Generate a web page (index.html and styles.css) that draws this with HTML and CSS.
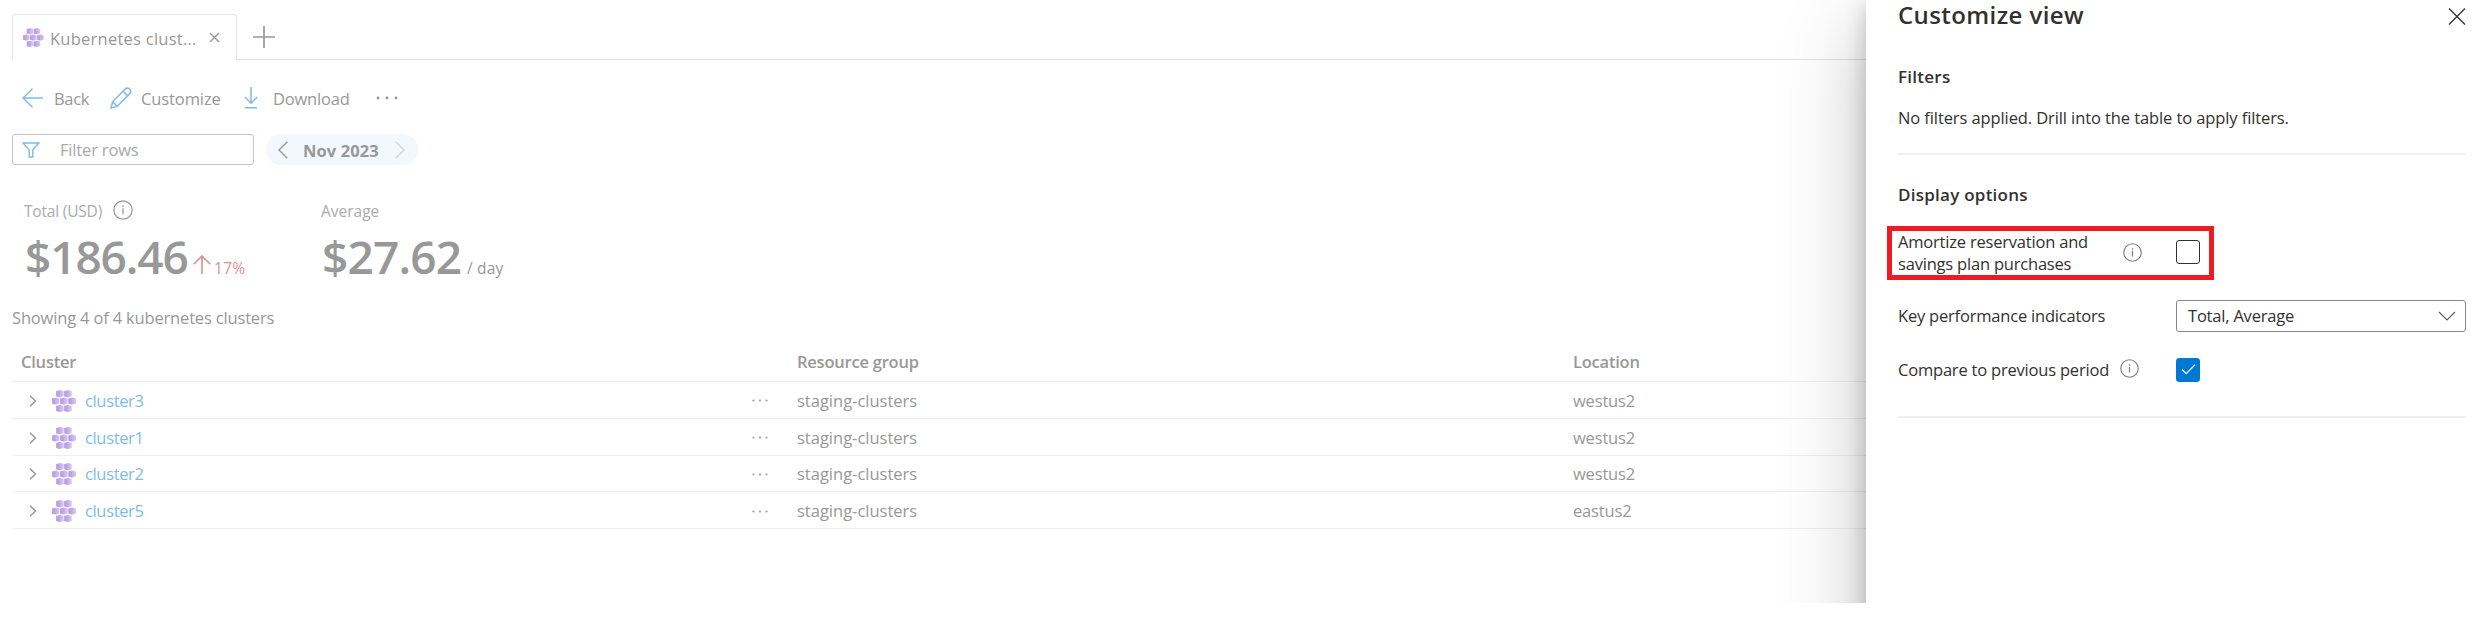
FILE: index.html
```html
<!DOCTYPE html>
<html lang="en">
<head>
<meta charset="utf-8">
<title>Kubernetes clusters</title>
<link rel="stylesheet" href="styles.css">
</head>
<body>
<svg class="defs" aria-hidden="true">
  <defs>
    <linearGradient id="hex" x1="0" x2="1"><stop offset="0" stop-color="#bda3e6"/><stop offset=".5" stop-color="#c8aeee"/><stop offset="1" stop-color="#dac4f8"/></linearGradient>
    <g id="h"><path fill="url(#hex)" d="M-3.7-2.6 0-3.6 3.7-2.6V2.6L0 3.6-3.7 2.6z"/><path fill="#b9a3df" d="M-3.7-2.6-.6-1.9V3.5L-3.7 2.6z"/></g>
    <symbol id="k8s" viewBox="0 0 24 22">
      <use href="#h" x="8" y="3.7"/><use href="#h" x="16" y="3.7"/>
      <use href="#h" x="3.8" y="11"/><use href="#h" x="12" y="11"/><use href="#h" x="20.2" y="11"/>
      <use href="#h" x="8" y="18.3"/><use href="#h" x="16" y="18.3"/>
    </symbol>
    <symbol id="info" viewBox="0 0 20 20"><circle cx="10" cy="10" r="9.2" fill="none" stroke="currentColor" stroke-width="1.2"/><path d="M10 8.3v6M10 5.4v1.6" stroke="currentColor" stroke-width="1.3"/></symbol>
    <symbol id="dots" viewBox="0 0 22 4"><circle cx="2" cy="2" r="1.4"/><circle cx="11" cy="2" r="1.4"/><circle cx="20" cy="2" r="1.4"/></symbol>
  </defs>
</svg>
<div class="app">
  <main class="main">
    <div class="tabs">
      <div class="tab">
        <svg class="tab-icon"><use href="#k8s"/></svg>
        <span class="tab-label">Kubernetes clust...</span>
        <svg class="tab-close" viewBox="0 0 12 12"><path d="M1 1l10 10M11 1L1 11"/></svg>
      </div>
      <div class="tab-new"><svg viewBox="0 0 22 22"><path d="M11 0v22M0 11h22"/></svg></div>
    </div>
    <div class="toolbar">
      <svg class="ic-back" viewBox="0 0 22 20"><path d="M21 10H1M10.500.7L1 10l9.500 9.300"/></svg>
      <span class="t-back">Back</span>
      <svg class="ic-pencil" viewBox="0 0 22 22"><path d="M1 21l1.600-6.200L15 2.300a3.200 3.200 0 0 1 4.600 4.600L7.200 19.400zM2.600 14.800l4.600 4.600M13 4.300l4.600 4.600"/></svg>
      <span class="t-custom">Customize</span>
      <svg class="ic-down" viewBox="0 0 14 22"><path d="M7 0v16M.8 10L7 16.200 13.200 10M1 20.700h12"/></svg>
      <span class="t-down">Download</span>
      <svg class="ic-dots"><use href="#dots"/></svg>
    </div>
    <div class="controls">
      <div class="filter">
        <svg viewBox="0 0 18 16"><path d="M1 1h16l-6.200 6.800v7.200H7.200V7.800z"/></svg>
        <span class="t-filter">Filter rows</span>
      </div>
      <div class="period">
        <svg viewBox="0 0 10 18"><path d="M9.300.8L1 9l8.300 8.200"/></svg>
        <span class="t-period">Nov 2023</span>
        <svg class="next" viewBox="0 0 10 18"><path d="M.7.8L9 9 .7 17.200"/></svg>
      </div>
    </div>
    <div class="kpis">
      <div class="kpi kpi-total">
        <div class="kpi-label"><span class="t-total">Total (USD)</span><svg><use href="#info"/></svg></div>
        <div class="kpi-row"><span class="kpi-value t-v1">$186.46</span><svg class="up" viewBox="0 0 18 19"><path d="M9 19V1M.7 9.300L9 1l8.300 8.300"/></svg><span class="pct">17%</span></div>
      </div>
      <div class="kpi">
        <div class="kpi-label"><span class="t-avg">Average</span></div>
        <div class="kpi-row"><span class="kpi-value t-v2">$27.62</span><span class="unit">/ day</span></div>
      </div>
    </div>
    <div class="summary"><span class="t-sum">Showing 4 of 4 kubernetes clusters</span></div>
    <div class="table">
      <div class="row head"><span class="c1"><span class="t-h">Cluster</span></span><span class="c2"><span class="t-h">Resource group</span></span><span class="c3"><span class="t-h">Location</span></span></div>
      <div class="row"><span class="c1"><svg class="chev" viewBox="0 0 8 12"><path d="M1 .7L6.500 6 1 11.300"/></svg><svg class="k8s"><use href="#k8s"/></svg><a class="t-link">cluster3</a><svg class="more"><use href="#dots"/></svg></span><span class="c2">staging-clusters</span><span class="c3">westus2</span></div>
      <div class="row"><span class="c1"><svg class="chev" viewBox="0 0 8 12"><path d="M1 .7L6.500 6 1 11.300"/></svg><svg class="k8s"><use href="#k8s"/></svg><a class="t-link">cluster1</a><svg class="more"><use href="#dots"/></svg></span><span class="c2">staging-clusters</span><span class="c3">westus2</span></div>
      <div class="row"><span class="c1"><svg class="chev" viewBox="0 0 8 12"><path d="M1 .7L6.500 6 1 11.300"/></svg><svg class="k8s"><use href="#k8s"/></svg><a class="t-link">cluster2</a><svg class="more"><use href="#dots"/></svg></span><span class="c2">staging-clusters</span><span class="c3">westus2</span></div>
      <div class="row"><span class="c1"><svg class="chev" viewBox="0 0 8 12"><path d="M1 .7L6.500 6 1 11.300"/></svg><svg class="k8s"><use href="#k8s"/></svg><a class="t-link">cluster5</a><svg class="more"><use href="#dots"/></svg></span><span class="c2">staging-clusters</span><span class="c3">eastus2</span></div>
    </div>
  </main>
  <aside class="panel">
    <header class="panel-head"><h2 class="t-title">Customize view</h2><svg viewBox="0 0 18 17"><path d="M1 .5l16 16M17 .5l-16 16"/></svg></header>
    <h3 class="h-filters">Filters</h3>
    <p class="nofilters">No filters applied. Drill into the table to apply filters.</p>
    <div class="rule"></div>
    <h3 class="h-display">Display options</h3>
    <div class="amortize">
      <span class="am-label">Amortize reservation and<br>savings plan purchases</span>
      <svg class="info"><use href="#info"/></svg><span class="box"></span>
    </div>
    <div class="option kpi-option"><span class="option-label">Key performance indicators</span>
      <span class="select"><span class="t-sel">Total, Average</span><svg viewBox="0 0 18 10"><path d="M1 1l8 8 8-8"/></svg></span></div>
    <div class="option compare"><span class="option-label">Compare to previous period<svg class="info"><use href="#info"/></svg></span>
      <span class="box checked"><svg viewBox="0 0 16 12"><path d="M1 6l4.500 4.500L15 1"/></svg></span></div>
    <div class="rule last"></div>
  </aside>
</div>
</body>
</html>
```

FILE: styles.css
```css
* { box-sizing: border-box; }
body { margin: 0; background: #fff; font: 16.5px/24px "Open Sans", "Noto Sans", sans-serif; color: #989898; overflow: hidden; }
svg { display: block; flex: none; fill: none; stroke: currentColor; }
.defs { position: absolute; width: 0; height: 0; stroke: none; }
span, a, h2 { white-space: nowrap; }
h2, h3, p { margin: 0; font-weight: 600; }
.app { position: relative; height: 603px; overflow: hidden; }

/* Tab strip */
.tabs { display: flex; height: 60px; padding: 14px 0 0 12px; }
.tab { display: flex; align-items: center; width: 225px; height: 46px; padding: 0 0 0 10px; border: 1.5px solid #e6e6e6; border-bottom: 0; border-radius: 3px 3px 0 0; }
.tab-icon { width: 21px; height: 19px; stroke: none; margin: 0 6px 0 0; }
.tab-label { width: 159px; padding-top: 2px; letter-spacing: .25px; }
.tab-close { width: 11px; height: 11px; stroke-width: 1.5; }
.tab-new { flex: 1; border-bottom: 1px solid #e1e1e1; padding: 12px 0 0 16px; }
.tab-new svg { width: 22px; height: 22px; stroke-width: 1.7; }

/* Commands */
.toolbar { display: flex; align-items: center; height: 74px; padding: 4px 0 0 22px; }
.toolbar svg { color: #7fbbea; stroke-width: 1.5; margin-bottom: 3px; }
.ic-back { width: 22px; height: 20px; margin-right: 10px; }
.t-back { width: 56px; letter-spacing: -.3px; }
.ic-pencil { width: 22px; height: 22px; margin-right: 9px; }
.t-custom { width: 103px; letter-spacing: -.1px; }
.ic-down { width: 14px; height: 22px; margin-right: 15px; }
.t-down { width: 103px; letter-spacing: -.2px; }
.toolbar .ic-dots { width: 22px; height: 4px; fill: #989898; stroke: none; }

.controls { display: flex; gap: 12px; height: 31px; padding-left: 12px; }
.filter { display: flex; align-items: center; width: 242px; border: 1.5px solid #c4c4c4; border-radius: 3px; padding-left: 9px; color: #a8a8a8; }
.filter svg { width: 18px; height: 16px; color: #7fbbea; stroke-width: 1.4; margin-right: 20px; }
.t-filter { padding-top: 1px; letter-spacing: -.17px; }
.period { display: flex; align-items: center; width: 152px; border-radius: 16px; background: #f2f8fd; padding: 0 12px; font-weight: 700; }
.period svg { width: 10px; height: 18px; stroke-width: 1.4; }
.period .next { color: #d2d6d9; }
.t-period { width: 92px; margin-left: 15px; padding-top: 2px; letter-spacing: .1px; }

/* Indicators */
.kpis { display: flex; height: 119px; padding: 34px 0 0 24px; }
.kpi-total { width: 297px; }
.kpi-label { display: flex; align-items: center; height: 24px; font-size: 15.5px; color: #ababab; }
.kpi-label svg { width: 20px; height: 20px; margin: -2px 0 0 11px; color: #989898; stroke: none; }
.t-total { letter-spacing: -.19px; }
.kpi-row { display: flex; align-items: baseline; margin-top: 3px; padding-left: 1px; height: 60px; line-height: 60px; font-size: 15.5px; }
.kpi-value { font-size: 46px; font-weight: 600; }
.t-v1 { width: 168px; letter-spacing: -1.1px; }
.t-v2 { width: 145px; letter-spacing: -.8px; }
.up { width: 18px; height: 19px; margin-right: 3px; color: #d98f94; stroke-width: 1.6; }
.pct { color: #d98f94; letter-spacing: .3px; }
.unit { letter-spacing: .2px; }
.summary { height: 68px; padding: 22px 0 0 12px; }
.t-sum { letter-spacing: -.17px; }

/* Cluster table */
.table { margin: -8px 0 0 12px; }
.row { display: flex; align-items: center; height: 36.750px; padding-top: 2px; border-bottom: 1.5px solid #edeff2; }
.head { height: 38px; padding: 0 0 2px; font-weight: 600; }
.t-h { letter-spacing: -.22px; }
.c1 { display: flex; align-items: center; width: 785px; padding-left: 17px; }
.head .c1 { padding-left: 9px; }
.c2 { width: 776px; }
.c3 { letter-spacing: -.17px; }
.chev { width: 8px; height: 12px; stroke-width: 1.5; margin-right: 15px; }
.k8s { width: 24px; height: 22px; stroke: none; margin-right: 9px; }
.t-link { color: #7fbbea; width: 667px; letter-spacing: -.35px; }
.more { width: 16px; height: 3px; fill: #989898; stroke: none; }

/* Side panel */
.panel { position: absolute; left: 1866px; top: 0; right: 0; bottom: -90px; padding: 0 19px 0 32px; background: #fff; color: #323130; box-shadow: 0 26px 78px rgba(0,0,0,.26), 0 5px 20px rgba(0,0,0,.2); }
.panel-head { display: flex; justify-content: space-between; height: 54px; line-height: 29px; }
.panel-head svg { width: 18px; height: 17px; margin-top: 8px; stroke-width: 1.3; }
.t-title { font-size: 24px; letter-spacing: .4px; }
h3 { font-size: 17px; letter-spacing: .25px; }
.h-filters { height: 41px; padding-top: 11px; }
.nofilters { height: 58px; padding-top: 11px; font-weight: 400; letter-spacing: -.1px; }
.rule { height: 2px; background: #f0f0f0; }
.h-display { height: 71px; padding-top: 28px; }
.amortize { display: flex; align-items: center; width: 327px; height: 54px; margin-left: -11px; border: 5px solid #ed1c24; padding-left: 6px; line-height: 22.500px; letter-spacing: -.2px; }
.am-label { width: 225px; }
.info { width: 19px; height: 19px; stroke: none; color: #7d7d7d; }
.box { width: 24px; height: 24px; border: 1.500px solid #323130; border-radius: 3px; margin-left: 34px; }
.amortize .info, .amortize .box { margin-bottom: 2px; }
.option { display: flex; align-items: center; height: 55px; letter-spacing: -.2px; }
.kpi-option { margin-top: 8px; }
.option-label { display: flex; align-items: center; width: 278px; }
.compare { margin-top: -1px; }
.compare .info { margin: 0 0 3px 11px; }
.option .box { margin: 0; }
.checked { display: flex; align-items: center; justify-content: center; background: #0078d4; border-color: #0078d4; color: #fff; }
.checked svg { width: 15px; height: 11px; stroke-width: 1.4; }
.select { display: flex; align-items: center; justify-content: space-between; flex: 1; height: 32px; border: 1.5px solid #8a8886; border-radius: 3px; padding: 0 9px 0 11px; }
.select svg { width: 18px; height: 10px; stroke-width: 1.2; color: #605e5c; }
.last { margin-top: 19px; }
```
